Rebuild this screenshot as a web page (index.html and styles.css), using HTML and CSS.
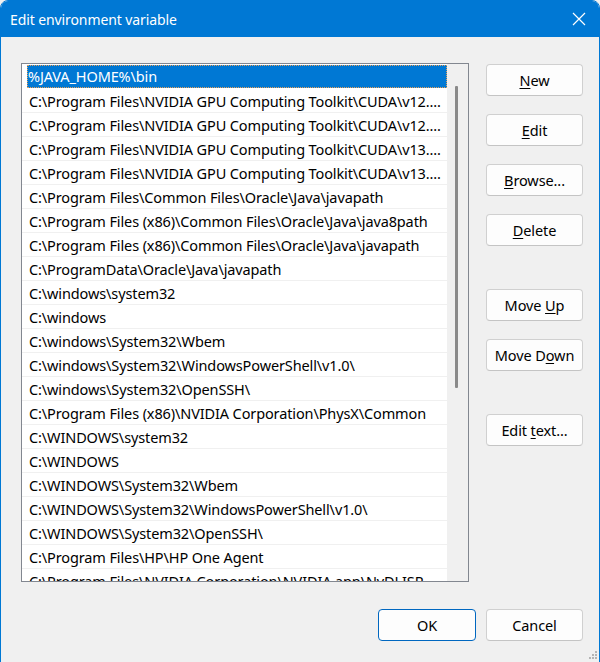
FILE: index.html
```html
<!DOCTYPE html>
<html>
<head>
<meta charset="utf-8">
<link rel="stylesheet" href="styles.css">
</head>
<body>
<div class="window">
  <div class="titlebar">
    <span class="title">Edit environment variable</span>
    <svg class="close" width="14" height="14" viewBox="0 0 14 14"><path d="M1 1 L13 13 M13 1 L1 13" stroke="#fff" stroke-width="1.2" fill="none"/></svg>
  </div>
  <div class="content">
    <div class="main">
      <div class="listbox">
        <div class="rows">
          <div class="row sel"><span class="selbox">%JAVA_HOME%\bin</span></div>
          <div class="row">C:\Program Files\NVIDIA GPU Computing Toolkit\CUDA\v12....</div>
          <div class="row">C:\Program Files\NVIDIA GPU Computing Toolkit\CUDA\v12....</div>
          <div class="row">C:\Program Files\NVIDIA GPU Computing Toolkit\CUDA\v13....</div>
          <div class="row">C:\Program Files\NVIDIA GPU Computing Toolkit\CUDA\v13....</div>
          <div class="row">C:\Program Files\Common Files\Oracle\Java\javapath</div>
          <div class="row">C:\Program Files (x86)\Common Files\Oracle\Java\java8path</div>
          <div class="row">C:\Program Files (x86)\Common Files\Oracle\Java\javapath</div>
          <div class="row">C:\ProgramData\Oracle\Java\javapath</div>
          <div class="row">C:\windows\system32</div>
          <div class="row">C:\windows</div>
          <div class="row">C:\windows\System32\Wbem</div>
          <div class="row">C:\windows\System32\WindowsPowerShell\v1.0\</div>
          <div class="row">C:\windows\System32\OpenSSH\</div>
          <div class="row">C:\Program Files (x86)\NVIDIA Corporation\PhysX\Common</div>
          <div class="row">C:\WINDOWS\system32</div>
          <div class="row">C:\WINDOWS</div>
          <div class="row">C:\WINDOWS\System32\Wbem</div>
          <div class="row">C:\WINDOWS\System32\WindowsPowerShell\v1.0\</div>
          <div class="row">C:\WINDOWS\System32\OpenSSH\</div>
          <div class="row">C:\Program Files\HP\HP One Agent</div>
          <div class="row">C:\Program Files\NVIDIA Corporation\NVIDIA app\NvDLISR</div>
        </div>
        <div class="scrollbar"><div class="thumb"></div></div>
      </div>
      <div class="side">
        <div class="group">
          <button class="btn"><u>N</u>ew</button>
          <button class="btn"><u>E</u>dit</button>
          <button class="btn"><u>B</u>rowse...</button>
          <button class="btn"><u>D</u>elete</button>
        </div>
        <div class="group">
          <button class="btn">Move <u>U</u>p</button>
          <button class="btn">Move D<u>o</u>wn</button>
        </div>
        <div class="group">
          <button class="btn">Edit <u>t</u>ext...</button>
        </div>
      </div>
    </div>
    <div class="footer">
      <button class="btn ok">OK</button>
      <button class="btn cancel">Cancel</button>
    </div>
  </div>
  <svg class="grip" width="12" height="12" viewBox="0 0 12 12">
    <rect x="8" y="0" width="2" height="2" fill="#b4b4b4"/>
    <rect x="5" y="3" width="2" height="2" fill="#b4b4b4"/>
    <rect x="8" y="3" width="2" height="2" fill="#b4b4b4"/>
    <rect x="2" y="6" width="2" height="2" fill="#b4b4b4"/>
    <rect x="5" y="6" width="2" height="2" fill="#b4b4b4"/>
    <rect x="8" y="6" width="2" height="2" fill="#b4b4b4"/>
  </svg>
</div>
</body>
</html>
```

FILE: styles.css
```css
html, body {
  margin: 0;
  padding: 0;
  background: #f0f0f0;
}
body {
  width: 600px;
  height: 662px;
  overflow: hidden;
  font-family: "Noto Sans", "Open Sans", sans-serif;
}
.window {
  position: relative;
  width: 600px;
  height: 672px;
  box-sizing: border-box;
  border: 1px solid #0078d4;
  border-radius: 8px;
  background: #f0f0f0;
  overflow: hidden;
}
.titlebar {
  height: 36px;
  background: #0078d4;
  display: flex;
  align-items: center;
  justify-content: space-between;
  padding: 0 13px 0 9px;
}
.title {
  color: #fff;
  font-size: 14px;
  letter-spacing: -0.1px;
  padding-top: 1px;
}
.close {
  display: block;
}
.content {
  padding: 26px 16px 0 20px;
}
.main {
  display: flex;
  gap: 17px;
}
.listbox {
  width: 448px;
  height: 519px;
  box-sizing: border-box;
  border: 1px solid #828790;
  background: #fff;
  display: flex;
  overflow: hidden;
}
.rows {
  width: 425px;
  padding-top: 1px;
  overflow: hidden;
}
.row {
  height: 23px;
  line-height: 24px;
  border-bottom: 1px solid #f0f0f0;
  font-size: 14.5px;
  color: #000;
  padding-left: 7px;
  white-space: nowrap;
  overflow: hidden;
  letter-spacing: -0.12px;
}
.row.sel {
  padding-left: 5px;
  border-bottom-color: #fff;
}
.selbox {
  display: block;
  background: #0078d4;
  color: #fff;
  height: 23px;
  line-height: 23px;
  padding-left: 1px;
  outline: 1px dotted #e5a05a;
  outline-offset: -1px;
}
.scrollbar {
  width: 21px;
  background: #f0f0f0;
  position: relative;
}
.thumb {
  position: absolute;
  left: 8px;
  top: 22px;
  width: 3px;
  height: 302px;
  background: #8a8a8a;
  border-radius: 1px;
}
.side {
  display: flex;
  flex-direction: column;
  gap: 43px;
  padding-top: 1px;
}
.group {
  display: flex;
  flex-direction: column;
  gap: 18px;
}
.btn {
  width: 97px;
  height: 32px;
  box-sizing: border-box;
  background: #fdfdfd;
  border: 1px solid #d0d0d0;
  border-bottom-color: #c4c4c4;
  border-radius: 4px;
  font-family: "Noto Sans", "Open Sans", sans-serif;
  font-size: 14.5px;
  color: #000;
  padding: 0;
  letter-spacing: -0.1px;
}
.btn u {
  text-decoration-thickness: 1px;
  text-underline-offset: 2px;
}
.footer {
  display: flex;
  justify-content: flex-end;
  gap: 10px;
  margin-top: 27px;
}
.ok {
  width: 98px;
  border: 1px solid #0067c0;
}
.grip {
  position: absolute;
  right: 0;
  top: 650px;
}
```
